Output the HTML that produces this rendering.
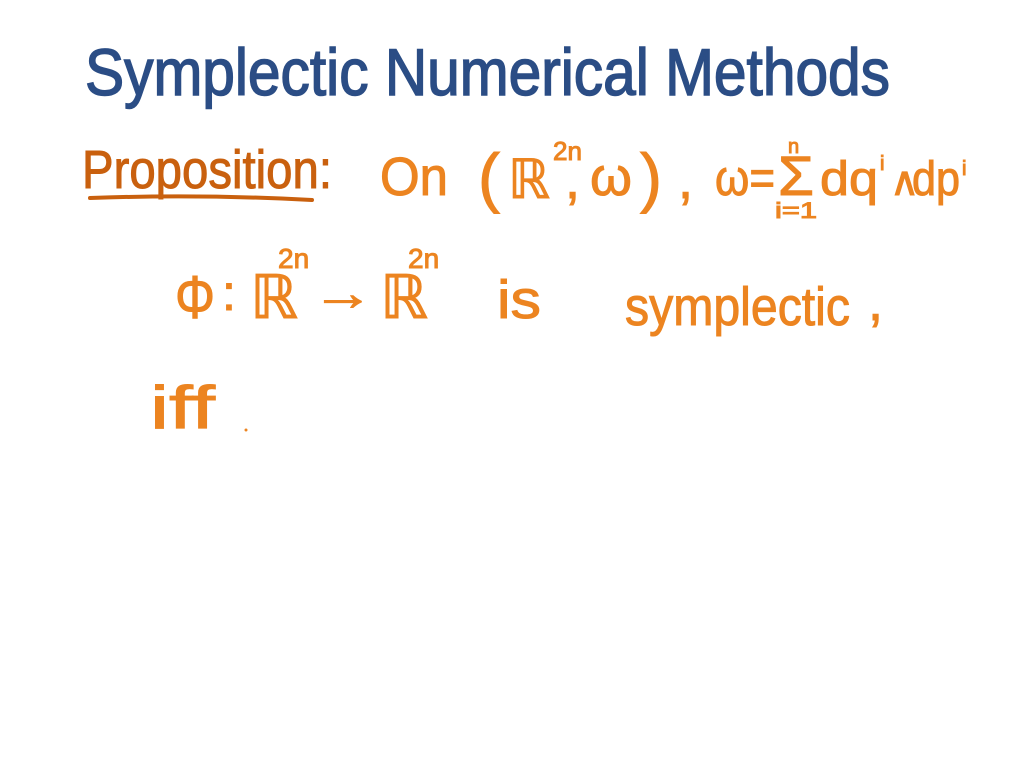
<!DOCTYPE html>
<html><head><meta charset="utf-8"><style>
html,body{margin:0;padding:0;background:#fff;width:1024px;height:768px;overflow:hidden}
svg{display:block}
text{font-family:"Liberation Sans","DejaVu Sans",sans-serif}
</style></head><body>
<svg width="1024" height="768" viewBox="0 0 1024 768" xmlns="http://www.w3.org/2000/svg">
<rect width="1024" height="768" fill="#fff"/>
<!-- Title -->
<text x="85" y="95" font-size="66" fill="#2b4d85" stroke="#2b4d85" stroke-width="1.5" textLength="805" lengthAdjust="spacingAndGlyphs">Symplectic  Numerical  Methods</text>
<!-- Proposition -->
<text x="82" y="188" font-size="54" fill="#c9600e" stroke="#c9600e" stroke-width="1" textLength="250" lengthAdjust="spacingAndGlyphs">Proposition:</text>
<path d="M90 198 Q200 194 312 200" stroke="#c9600e" stroke-width="4" fill="none" stroke-linecap="round"/>
<g fill="#ec8420" stroke="#ec8420" stroke-width="1">
<text x="380" y="195" font-size="54" textLength="68" lengthAdjust="spacingAndGlyphs">On</text>
<text x="478" y="200" font-size="66" textLength="22" lengthAdjust="spacingAndGlyphs">(</text>
<text x="508" y="198" font-size="54" textLength="42" lengthAdjust="spacingAndGlyphs">ℝ</text>
<text x="553" y="160" font-size="26">2n</text>
<text x="565" y="198" font-size="54">,</text>
<text x="590" y="195" font-size="54" textLength="42" lengthAdjust="spacingAndGlyphs">ω</text>
<text x="640" y="200" font-size="66" textLength="22" lengthAdjust="spacingAndGlyphs">)</text>
<text x="678" y="198" font-size="54">,</text>
<text x="715" y="195" font-size="50" textLength="60" lengthAdjust="spacingAndGlyphs">ω=</text>
<text x="778" y="195" font-size="56" textLength="36" lengthAdjust="spacingAndGlyphs">Σ</text>
<text x="788" y="153" font-size="20">n</text>
<text x="775" y="218" font-size="22" textLength="42" lengthAdjust="spacingAndGlyphs">i=1</text>
<text x="820" y="195" font-size="48" textLength="58" lengthAdjust="spacingAndGlyphs">dq</text>
<text x="880" y="170" font-size="20">i</text>
<text x="890" y="195" font-size="40">∧</text>
<text x="912" y="195" font-size="48" textLength="48" lengthAdjust="spacingAndGlyphs">dp</text>
<text x="962" y="175" font-size="20">i</text>
<!-- line 3 -->
<text x="175" y="318" font-size="60" textLength="40" lengthAdjust="spacingAndGlyphs">Φ</text>
<text x="222" y="310" font-size="50">:</text>
<text x="250" y="318" font-size="60" textLength="48" lengthAdjust="spacingAndGlyphs">ℝ</text>
<text x="278" y="268" font-size="28">2n</text>
<text x="312" y="310" font-size="50" textLength="62" lengthAdjust="spacingAndGlyphs">→</text>
<text x="380" y="318" font-size="60" textLength="48" lengthAdjust="spacingAndGlyphs">ℝ</text>
<text x="408" y="268" font-size="28">2n</text>
<text x="497" y="318" font-size="54" textLength="44" lengthAdjust="spacingAndGlyphs">is</text>
<text x="625" y="325" font-size="54" textLength="225" lengthAdjust="spacingAndGlyphs">symplectic</text>
<text x="868" y="320" font-size="54">,</text>
<!-- iff -->
<text x="150" y="428" font-size="60" textLength="65" lengthAdjust="spacingAndGlyphs">iff</text>
</g>
<circle cx="246" cy="430" r="1.5" fill="#ec8420"/>
</svg>
</body></html>
